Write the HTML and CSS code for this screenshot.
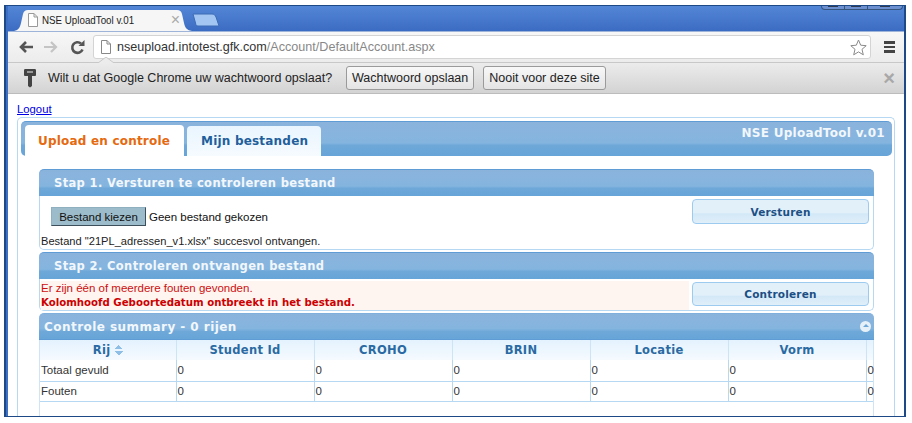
FILE: index.html
```html
<!DOCTYPE html>
<html lang="nl">
<head>
    <meta charset="UTF-8">
    <meta name="viewport" content="width=device-width, initial-scale=1.0">
    <title>NSE UploadTool v.01</title>
    <link rel="stylesheet" href="styles.css">
</head>
<body>

<div class="window">

    <!-- title bar with chrome tabs -->
    <div class="titlebar">
        <div class="chrome-tab">
            <svg class="tab-shape" width="178" height="22" viewBox="0 0 178 22"><path d="M0 22 C5 21 6 18 7 14 L9 5 C10 2 11 1 14 1 L163 1 C166 1 167 2 168 5 L170 14 C171 18 172 21 178 22 Z" fill="#f6f6f6"/></svg>
            <svg class="page-icon tab-icon" width="11" height="14" viewBox="0 0 11 14"><path d="M1.5 .5H7L10.5 4V13.5H1.5Z M7 .5V4H10.5" fill="#fff" stroke="#999"/></svg>
            <span class="chrome-tab-title">NSE UploadTool v.01</span>
            <span class="chrome-tab-close">×</span>
        </div>
        <svg class="new-tab" width="28" height="14" viewBox="0 0 28 14"><path d="M1 1H20C22 1 23 2 24 4L27 13H6C4 13 4 12 3.500 10Z" fill="#a3c5f2" stroke="#3c6cb4"/></svg>
        <div class="win-controls">
            <span class="win-min"></span>
            <span class="win-max"></span>
            <span class="win-close"></span>
        </div>
    </div>

    <!-- toolbar -->
    <div class="toolbar">
        <svg class="nav-icon" width="16" height="14" viewBox="0 0 16 14"><path d="M15 7H4M8 2L3 7L8 12" fill="none" stroke="#555" stroke-width="2.600"/></svg>
        <svg class="nav-icon nav-forward" width="16" height="14" viewBox="0 0 16 14"><path d="M1 7H12M8 2L13 7L8 12" fill="none" stroke="#c4c4c4" stroke-width="2.200"/></svg>
        <svg class="nav-icon nav-reload" width="15" height="15" viewBox="0 0 15 15"><path d="M12.500 9.500A5.300 5.300 0 1 1 11 3.500" fill="none" stroke="#555" stroke-width="2.600"/><path d="M8.500 6H14.500V0Z" fill="#555"/></svg>
        <div class="omnibox">
            <svg class="page-icon" width="11" height="14" viewBox="0 0 11 14"><path d="M1.500 .5H7L10.500 4V13.500H1.500Z M7 .5V4H10.500" fill="#fff" stroke="#888"/></svg>
            <span class="url"><b>nseupload.intotest.gfk.com</b>/Account/DefaultAccount.aspx</span>
            <svg class="star" width="17" height="17" viewBox="0 0 17 17"><path d="M8.500 1L10.700 6.200L16.200 6.700L12 10.300L13.300 15.800L8.500 12.900L3.700 15.800L5 10.300L.8 6.700L6.300 6.200Z" fill="#fff" stroke="#8a8a8a"/></svg>
        </div>
        <div class="menu-icon"><span></span><span></span><span></span></div>
        <svg class="bubble-tip" width="16" height="6" viewBox="0 0 16 6"><path d="M0 6L8 0L16 6Z" fill="#ececec"/><path d="M0 6L8 0L16 6" fill="none" stroke="#c8c8c8"/></svg>
    </div>

    <!-- password infobar -->
    <div class="infobar">
        <svg class="key" width="14" height="20" viewBox="0 0 14 20"><path d="M2 1H12C13 1 13 2 13 3V7C13 8 12 8 11 8H9V18L7 19.500L5 18V8H3C2 8 1 8 1 7V3C1 2 1 1 2 1Z" fill="#444"/><rect x="4" y="3" width="6" height="2" fill="#999"/></svg>
        <span class="infobar-text">Wilt u dat Google Chrome uw wachtwoord opslaat?</span>
        <button class="infobar-btn btn-save">Wachtwoord opslaan</button>
        <button class="infobar-btn">Nooit voor deze site</button>
        <span class="infobar-close">×</span>
    </div>

    <!-- page -->
    <div class="page">
        <a class="logout" href="#">Logout</a>

        <div class="tabs">
            <div class="tabs-head">
                <a class="tab tab-active" href="#">Upload en controle</a>
                <a class="tab" href="#">Mijn bestanden</a>
                <span class="app-title">NSE UploadTool v.01</span>
            </div>

            <div class="panels">
                <div class="panel">
                    <h3 class="panel-head">Stap 1. Versturen te controleren bestand</h3>
                    <div class="panel-body step-one">
                        <div class="upload-row">
                            <div class="file-pick">
                                <button class="file-btn">Bestand kiezen</button>
                                <span>Geen bestand gekozen</span>
                            </div>
                            <button class="action-btn">Versturen</button>
                        </div>
                        <p class="status">Bestand "21PL_adressen_v1.xlsx" succesvol ontvangen.</p>
                    </div>
                </div>

                <div class="panel">
                    <h3 class="panel-head">Stap 2. Controleren ontvangen bestand</h3>
                    <div class="panel-body step-two">
                        <div class="errors">
                            <p>Er zijn één of meerdere fouten gevonden.</p>
                            <p class="error-main">Kolomhoofd Geboortedatum ontbreekt in het bestand.</p>
                        </div>
                        <button class="action-btn">Controleren</button>
                    </div>
                </div>

                <div class="panel summary">
                    <div class="summary-head">
                        <span>Controle summary - 0 rijen</span>
                        <span class="collapse"></span>
                    </div>
                    <div class="grid-wrap">
                        <table class="grid">
                            <colgroup>
                                <col class="col-first"><col class="col"><col class="col"><col class="col"><col class="col"><col class="col"><col class="col-rest">
                            </colgroup>
                            <thead>
                                <tr>
                                    <th>Rij <span class="sort"></span></th>
                                    <th>Student Id</th>
                                    <th>CROHO</th>
                                    <th>BRIN</th>
                                    <th>Locatie</th>
                                    <th>Vorm</th>
                                    <th></th>
                                </tr>
                            </thead>
                            <tbody>
                                <tr><td>Totaal gevuld</td><td>0</td><td>0</td><td>0</td><td>0</td><td>0</td><td>0</td></tr>
                                <tr><td>Fouten</td><td>0</td><td>0</td><td>0</td><td>0</td><td>0</td><td>0</td></tr>
                            </tbody>
                        </table>
                    </div>
                </div>
            </div>
        </div>
    </div>
</div>

</body>
</html>
```

FILE: styles.css
```css
* {
    box-sizing: border-box;
}

html, body {
    margin: 0;
    height: 423px;
    overflow: hidden;
    background-color: #fff;
}

p, h3 {
    margin: 0;
}

body {
    padding: 5px 6px 6px 4px;
    font-family: 'Liberation Sans', Arial, sans-serif;
    font-size: 12px;
    color: #222;
}

.window {
    height: 412px;
    display: flex;
    flex-direction: column;
    overflow: hidden;
    padding-left: 2px;
    border: 1px solid #1d4a86;
    border-left: 2px solid #1d4a86;
    border-right: 2px solid #1d4a86;
    background-color: #3d6fc4;
}

/* title bar */
.titlebar {
    height: 25px;
    flex: none;
    display: flex;
    align-items: flex-end;
    padding-left: 6px;
    position: relative;
    background: linear-gradient(#5486d6, #3b6cc3);
}

.chrome-tab {
    width: 178px;
    height: 22px;
    position: relative;
    display: flex;
    align-items: center;
    padding: 0 0 0 13px;
    font-size: 12px;
    color: #222;
}

.tab-shape {
    position: absolute;
    left: 0;
    top: 0;
}

.tab-icon, .chrome-tab-title, .chrome-tab-close {
    position: relative;
}

.chrome-tab-title {
    margin-left: 4px;
    font-size: 11.500px;
    transform: scaleX(.85);
    transform-origin: left;
    white-space: nowrap;
}

.chrome-tab-close {
    margin-left: auto;
    margin-right: 12px;
    font-size: 16px;
    color: #aaa;
}

.new-tab {
    margin: 0 0 4px 0;
}

.win-controls {
    position: absolute;
    top: -1px;
    right: 1px;
    width: 82px;
    height: 5px;
    display: flex;
    border: 1px solid #35557f;
    border-top: none;
    border-radius: 0 0 4px 4px;
    background-color: #6c8fd0;
}

.win-controls span {
    height: 100%;
    border-right: 1px solid #35557f;
    background: linear-gradient(#2c3a52 45%, transparent 45%) center / 10px 100% no-repeat;
}

.win-min, .win-max {
    width: 23px;
}

.win-close {
    flex: 1;
    border-right: none !important;
}

/* toolbar */
.toolbar {
    height: 32px;
    flex: none;
    display: flex;
    align-items: center;
    position: relative;
    padding: 0 9px 0 10px;
    border-top: 1px solid #9eb4d8;
    border-bottom: 1px solid #c8c8c8;
    background: linear-gradient(#f7f7f7, #ececec);
}

.nav-forward {
    margin-left: 9px;
}

.nav-reload {
    margin-left: 11px;
}

.omnibox {
    width: 778px;
    height: 24px;
    margin-left: 8px;
    display: flex;
    align-items: center;
    padding: 0 3px 0 6px;
    border: 1px solid #d4d4d4;
    border-radius: 3px;
    background-color: #fff;
    font-size: 12.600px;
    color: #888;
}

.url {
    margin-left: 6px;
    flex: 1;
}

.url b {
    font-weight: normal;
    color: #333;
}

.menu-icon {
    margin-left: auto;
    display: flex;
    flex-direction: column;
    gap: 2px;
    width: 11px;
}

.menu-icon span {
    height: 2.500px;
    background-color: #444;
}

.bubble-tip {
    position: absolute;
    left: 90px;
    bottom: -1px;
}

/* infobar */
.infobar {
    height: 31px;
    flex: none;
    display: flex;
    align-items: center;
    padding: 0 9px 0 15px;
    border-bottom: 1px solid #bcbcbc;
    background: linear-gradient(#ececec, #d3d3d3);
    font-size: 12.500px;
    color: #222;
}

.infobar-text {
    margin-left: 11px;
    width: 298px;
}

.infobar-btn {
    height: 24px;
    padding: 0 5px;
    margin: 0;
    border: 1px solid #9a9a9a;
    border-radius: 3px;
    background: linear-gradient(#f8f8f8, #e4e4e4);
    font-family: inherit;
    font-size: 12.500px;
    color: #222;
    white-space: nowrap;
}

.btn-save {
    margin-right: 9px;
}

.infobar-close {
    margin-left: auto;
    font-size: 20px;
    font-weight: bold;
    color: #a8a8a8;
}

/* page */
.page {
    flex: 1;
    min-height: 0;
    padding: 8px 9px 0 9px;
    overflow: hidden;
    background-color: #fff;
}

.logout {
    display: block;
    height: 15px;
    font-size: 11.300px;
    line-height: 14px;
    color: #0000e6;
}

.tabs {
    height: 320px;
    padding: 3px 2px 0 3px;
    border: 1px solid #b6d8f2;
    border-bottom: none;
    border-radius: 5px 5px 0 0;
}

.tabs-head {
    height: 35px;
    display: flex;
    align-items: flex-end;
    gap: 3px;
    padding-left: 4px;
    position: relative;
    border-radius: 5px;
    background: linear-gradient(#8bb3dc, #84b5df 62%, #6ea8d9 68%, #67a4d7);
    border-top: 1px solid #5f9cd6;
}

.tab {
    width: 134px;
    height: 30px;
    padding-left: 14px;
    display: flex;
    align-items: center;
    border-radius: 4px 4px 0 0;
    background: linear-gradient(#e9f5fe, #f6fbff);
    font-family: 'DejaVu Sans', Verdana, sans-serif;
    font-size: 12px;
    font-weight: bold;
    letter-spacing: .2px;
    color: #1f5f9c;
    text-decoration: none;
    white-space: nowrap;
}

.tab-active {
    width: 159px;
    height: 31px;
    padding-left: 13px;
    background: #fff;
    color: #e5690f;
}

.app-title {
    position: absolute;
    top: 4px;
    right: 7px;
    font-family: 'DejaVu Sans', Verdana, sans-serif;
    font-size: 12px;
    font-weight: bold;
    letter-spacing: .3px;
    color: #f2f7fc;
}

.panels {
    margin: 13px 18px 0 18px;
}

.panel-head {
    height: 27px;
    padding-left: 15px;
    display: flex;
    align-items: center;
    border-top: 1px solid #5f9cd6;
    border-radius: 5px 5px 0 0;
    background: linear-gradient(#8bb3dc, #84b5df 62%, #6ea8d9 70%, #67a4d7);
    font-family: 'DejaVu Sans', Verdana, sans-serif;
    font-size: 11.500px;
    font-weight: bold;
    letter-spacing: .36px;
    color: #f2f7fc;
}

.panel-body {
    border: 1px solid #b6d8f2;
    border-top: none;
    border-radius: 0 0 5px 5px;
}

.panel + .panel {
    margin-top: 2px;
}

.step-one {
    height: 54px;
    padding: 3px 4px 0 1px;
}

.upload-row {
    display: flex;
    justify-content: space-between;
    align-items: flex-start;
    height: 36px;
}

.file-pick {
    display: flex;
    align-items: center;
    gap: 3px;
    margin: 8px 0 0 10px;
    font-size: 11.500px;
    color: #111;
}

.file-btn {
    width: 95px;
    height: 19px;
    padding: 0;
    border: 1px solid #8fb0bf;
    border-right-color: #3c4f5a;
    border-bottom-color: #3c4f5a;
    background-color: #9dbccb;
    font-family: inherit;
    font-size: 11.500px;
    color: #111;
}

.action-btn {
    width: 177px;
    height: 25px;
    padding: 0;
    border: 1px solid #9ccbef;
    border-radius: 4px;
    background: linear-gradient(#e2f0fa 55%, #d3e8f7 60%, #e0eff9);
    font-family: 'DejaVu Sans', Verdana, sans-serif;
    font-size: 10.500px;
    font-weight: bold;
    letter-spacing: .2px;
    color: #1b4f85;
}

.status {
    font-size: 11.100px;
    line-height: 13px;
    color: #222;
}

.step-two {
    height: 32px;
    padding: 2px 4px 1px 1px;
    display: flex;
    justify-content: space-between;
    align-items: flex-start;
}

.step-two .action-btn {
    height: 24px;
    margin-top: 1px;
}

.errors {
    width: 648px;
    height: 29px;
    background-color: #fff5f0;
    font-size: 11.500px;
    line-height: 14px;
    color: #cc1010;
}

.error-main {
    margin-top: 1px;
    font-family: 'DejaVu Sans', Verdana, sans-serif;
    font-size: 10.200px;
    font-weight: bold;
    color: #cc0000;
}

.summary-head {
    height: 27px;
    padding: 0 3px 0 5px;
    display: flex;
    align-items: center;
    justify-content: space-between;
    border-top: 1px solid #7fb0dd;
    border-bottom: 1px solid #5f9cd6;
    border-radius: 5px 5px 0 0;
    background: linear-gradient(#8bb3dc, #84b5df 58%, #6ea8d9 70%, #67a4d7);
    font-family: 'DejaVu Sans', Verdana, sans-serif;
    font-size: 12px;
    font-weight: bold;
    letter-spacing: .45px;
    color: #f2f7fc;
}

.collapse {
    width: 11px;
    height: 11px;
    position: relative;
    border-radius: 50%;
    background-color: #e6f0f8;
}

.collapse::after {
    content: "";
    position: absolute;
    left: 3px;
    top: 3px;
    border-left: 3px solid transparent;
    border-right: 3px solid transparent;
    border-bottom: 3px solid #6ea8d9;
}

.grid-wrap {
    height: 80px;
    border-left: 1px solid #cfe4f5;
    border-right: 1px solid #cfe4f5;
}

.grid {
    width: 833px;
    table-layout: fixed;
    border-collapse: collapse;
}

.col-first {
    width: 136px;
}

.col {
    width: 138px;
}

.col-rest {
    width: 7px;
}

.grid th {
    height: 20px;
    padding: 0;
    border-left: 1px solid #cde3f6;
    background: linear-gradient(#e4f2fe, #f5faff);
    font-family: 'DejaVu Sans', Verdana, sans-serif;
    font-size: 11.500px;
    font-weight: bold;
    letter-spacing: .3px;
    color: #2a6aa3;
}

.grid th:first-child, .grid td:first-child {
    border-left: none;
}

.grid td {
    height: 21px;
    padding: 0 0 0 1px;
    border-left: 1px solid #b6d8f2;
    border-bottom: 1px solid #b6d8f2;
    font-size: 11.500px;
    color: #333;
    white-space: nowrap;
}

.grid tbody tr:last-child td {
    height: 20px;
}

.sort {
    display: inline-block;
    width: 8px;
    height: 10px;
    vertical-align: -1px;
    background:
        linear-gradient(to top right, transparent 50%, #8fbfe6 50%) left bottom / 4px 4px no-repeat,
        linear-gradient(to top left, transparent 50%, #8fbfe6 50%) right bottom / 4px 4px no-repeat,
        linear-gradient(to bottom right, transparent 50%, #8fbfe6 50%) left top / 4px 4px no-repeat,
        linear-gradient(to bottom left, transparent 50%, #8fbfe6 50%) right top / 4px 4px no-repeat;
}
```
